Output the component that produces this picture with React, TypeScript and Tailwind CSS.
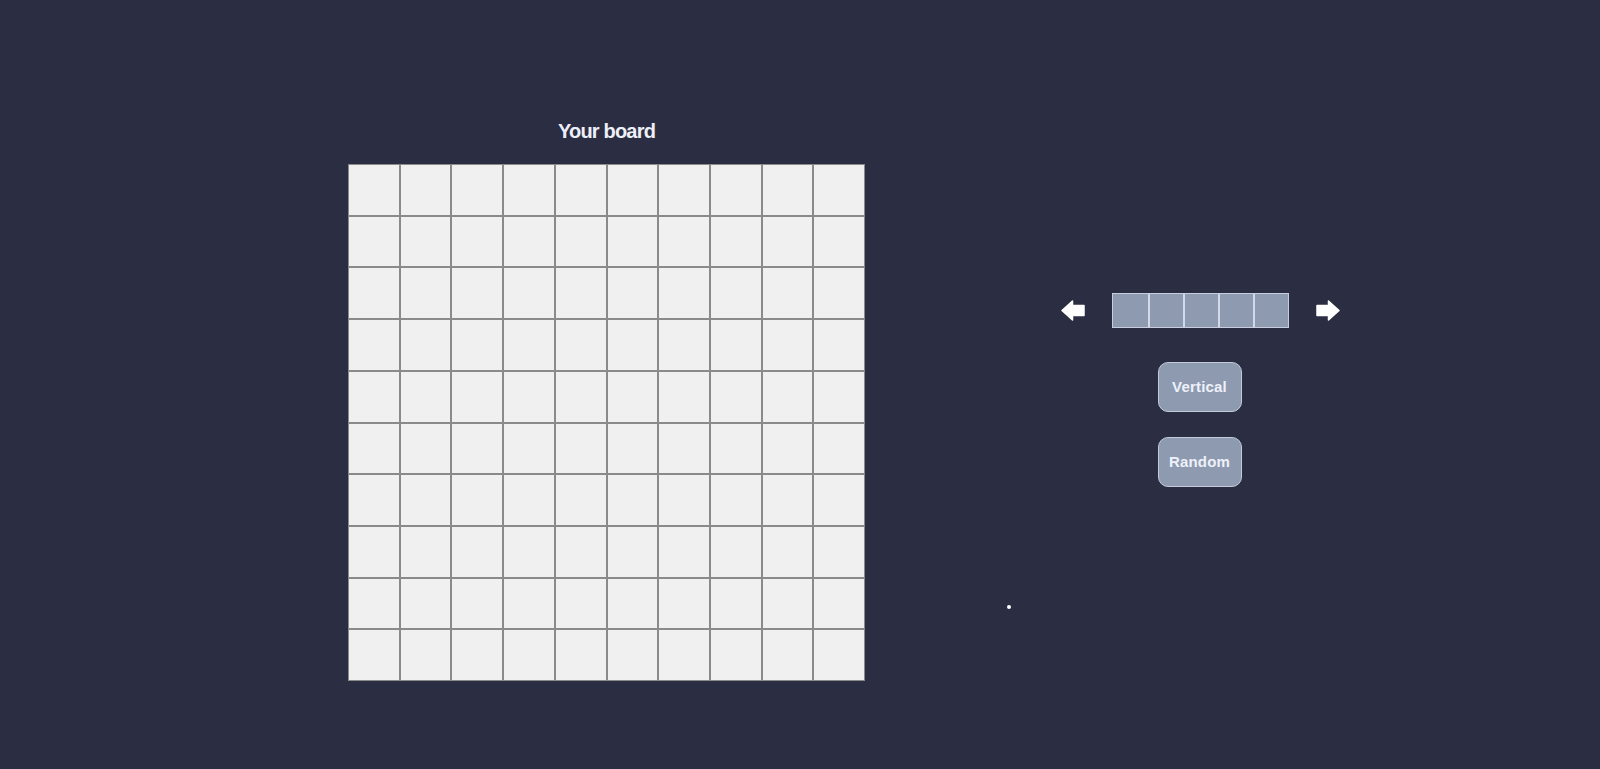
import type { ReactNode } from "react";

const cells = Array.from({ length: 100 }, (_, i) => i);
const shipCells = [0, 1, 2, 3, 4];

function BlockArrow({ dir }: { dir: "left" | "right" }) {
  return (
    <svg
      width="24"
      height="21"
      viewBox="0 0 24 21"
      className={dir === "right" ? "-scale-x-100" : ""}
    >
      <path
        d="M1 10.5 L11.5 1 L11.5 5.5 L23 5.5 L23 15.5 L11.5 15.5 L11.5 20 Z"
        fill="#ffffff"
        stroke="#ffffff"
        strokeWidth="1.5"
        strokeLinejoin="round"
      />
    </svg>
  );
}

function PanelButton({ children }: { children: ReactNode }) {
  return (
    <button className="h-[50px] w-[84px] rounded-[10px] border border-[#c3cad9] bg-[#8d9ab0] text-[15px] font-bold tracking-[0.2px] text-[#eef1fa]">
      {children}
    </button>
  );
}

export default function App() {
  return (
    <div
      className="relative flex h-[769px] w-full bg-[#2b2d42] text-white"
      style={{ fontFamily: '"Liberation Sans", Arial, sans-serif' }}
    >
      <section className="ml-[348px] mt-[119px] flex flex-col items-center">
        <h1 className="text-[20px] font-bold leading-[24px] tracking-[-0.8px] text-[#eef0f8]">
          Your board
        </h1>
        <div className="mt-[21px] grid h-[517px] w-[517px] grid-cols-10 grid-rows-10">
          {cells.map((c) => (
            <div key={c} className="border border-[#8a8a8a] bg-[#f0f0f0]" />
          ))}
        </div>
      </section>

      <section className="ml-[196px] mt-[293px] flex flex-col items-center">
        <div className="flex items-center">
          <BlockArrow dir="left" />
          <div className="ml-[27px] flex h-[35px] border border-[#c8cee0]">
            {shipCells.map((s) => (
              <div
                key={s}
                className="h-full w-[35px] border-l-2 border-[#d3d9e8] bg-[#8d9ab0] first:border-l-0"
              />
            ))}
          </div>
          <div className="ml-[27px]">
            <BlockArrow dir="right" />
          </div>
        </div>
        <div className="mr-[2px] mt-[34px] flex flex-col items-center gap-[25px]">
          <PanelButton>Vertical</PanelButton>
          <PanelButton>Random</PanelButton>
        </div>
      </section>

      <span className="absolute left-[1007px] top-[605px] h-[4px] w-[4px] rounded-full bg-white" />
    </div>
  );
}
